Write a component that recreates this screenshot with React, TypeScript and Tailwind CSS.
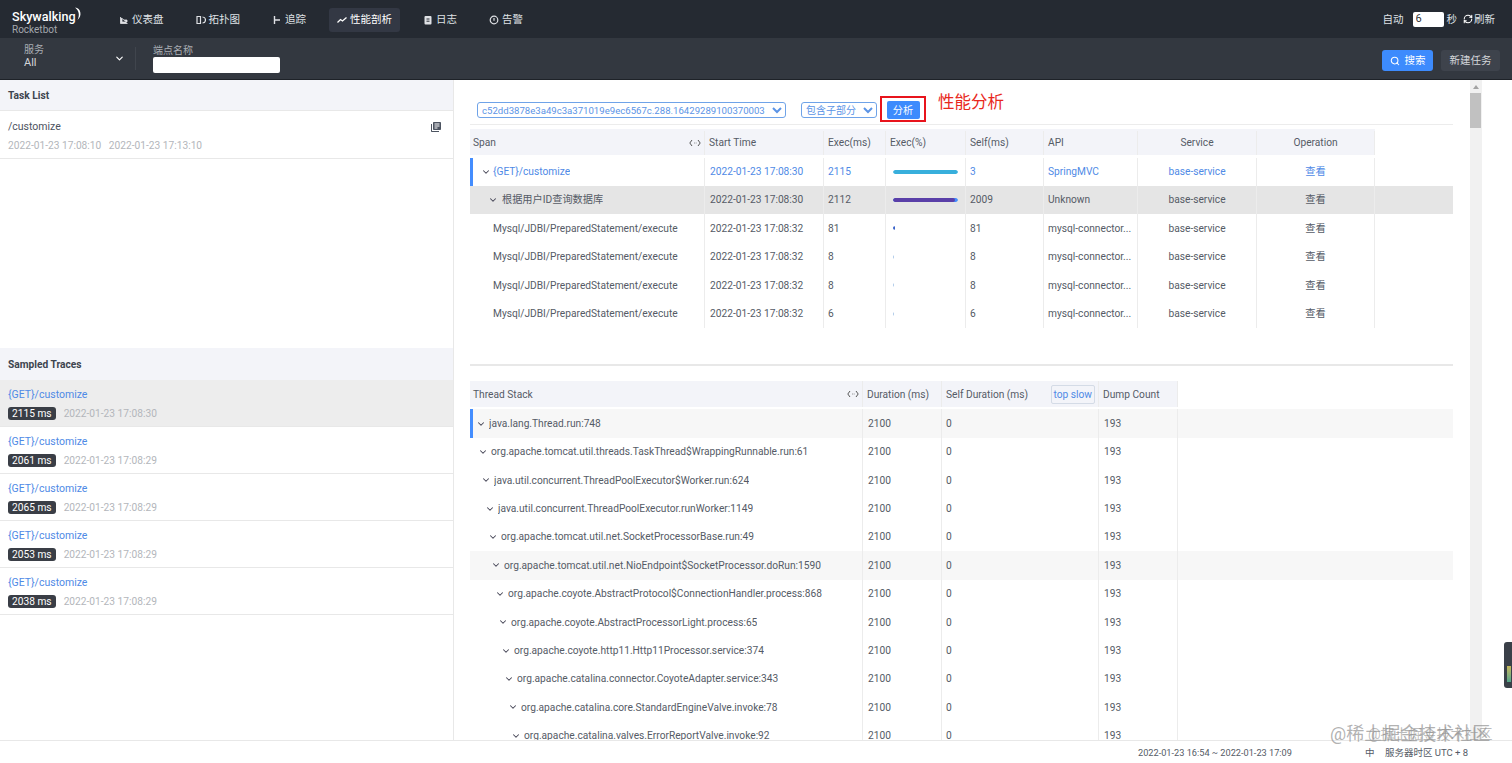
import React from 'react';
import { Search, RefreshCw, ChevronDown } from 'lucide-react';

const navItems = [
  { label: '仪表盘', icon: 'dash' },
  { label: '拓扑图', icon: 'topo' },
  { label: '追踪', icon: 'trace' },
  { label: '性能剖析', icon: 'perf', active: true },
  { label: '日志', icon: 'log' },
  { label: '告警', icon: 'alarm' },
];

const NavIcon: React.FC<{ name: string }> = ({ name }) => (
  <svg width="10" height="10" viewBox="0 0 10 10" fill="none" stroke="currentColor" strokeWidth="1.2" className="shrink-0">
    {name === 'dash' && <path d="M1.5 2v6.5h7M3 7V3.5l2 1.5h3v2z" fill="currentColor" strokeWidth="0.8" />}
    {name === 'topo' && <path d="M1 1.5h3.5v7H1zM6.5 2a3 3 0 0 1 0 6" />}
    {name === 'trace' && <path d="M2.5 1v8M2.5 5H8" strokeWidth="1.4" />}
    {name === 'perf' && <path d="M0.5 7.5L3.5 4.5L5.5 6L9.5 2.5" strokeWidth="1.3" />}
    {name === 'log' && (
      <>
        <rect x="1.5" y="1" width="7" height="8.5" rx="1" fill="currentColor" stroke="none" />
        <path d="M3.5 4h3M3.5 6.2h3" stroke="#252a32" strokeWidth="1" />
      </>
    )}
    {name === 'alarm' && (
      <>
        <circle cx="5" cy="5" r="3.8" />
        <path d="M5 3v2.8" />
      </>
    )}
  </svg>
);

const spans = [
  { name: '{GET}/customize', time: '2022-01-23 17:08:30', exec: '2115', self: '3', api: 'SpringMVC', kind: 'root' },
  { name: '根据用户ID查询数据库', time: '2022-01-23 17:08:30', exec: '2112', self: '2009', api: 'Unknown', kind: 'sel' },
  { name: 'Mysql/JDBI/PreparedStatement/execute', time: '2022-01-23 17:08:32', exec: '81', self: '81', api: 'mysql-connector...', kind: 'a' },
  { name: 'Mysql/JDBI/PreparedStatement/execute', time: '2022-01-23 17:08:32', exec: '8', self: '8', api: 'mysql-connector...', kind: 'b' },
  { name: 'Mysql/JDBI/PreparedStatement/execute', time: '2022-01-23 17:08:32', exec: '8', self: '8', api: 'mysql-connector...', kind: 'b' },
  { name: 'Mysql/JDBI/PreparedStatement/execute', time: '2022-01-23 17:08:32', exec: '6', self: '6', api: 'mysql-connector...', kind: 'b' },
];

const stacks = [
  'java.lang.Thread.run:748',
  'org.apache.tomcat.util.threads.TaskThread$WrappingRunnable.run:61',
  'java.util.concurrent.ThreadPoolExecutor$Worker.run:624',
  'java.util.concurrent.ThreadPoolExecutor.runWorker:1149',
  'org.apache.tomcat.util.net.SocketProcessorBase.run:49',
  'org.apache.tomcat.util.net.NioEndpoint$SocketProcessor.doRun:1590',
  'org.apache.coyote.AbstractProtocol$ConnectionHandler.process:868',
  'org.apache.coyote.AbstractProcessorLight.process:65',
  'org.apache.coyote.http11.Http11Processor.service:374',
  'org.apache.catalina.connector.CoyoteAdapter.service:343',
  'org.apache.catalina.core.StandardEngineValve.invoke:78',
  'org.apache.catalina.valves.ErrorReportValve.invoke:92',
];

const traces = [
  { ms: '2115 ms', time: '2022-01-23 17:08:30', selected: true },
  { ms: '2061 ms', time: '2022-01-23 17:08:29' },
  { ms: '2065 ms', time: '2022-01-23 17:08:29' },
  { ms: '2053 ms', time: '2022-01-23 17:08:29' },
  { ms: '2038 ms', time: '2022-01-23 17:08:29' },
];

const Caret: React.FC = () => <ChevronDown size={10} strokeWidth={2.5} className="shrink-0 text-[#445]" />;

const ResizeMark: React.FC = () => (
  <svg width="12" height="8" viewBox="0 0 12 8" fill="none" stroke="#444" strokeWidth="0.9">
    <path d="M3 1L0.8 4L3 7M9 1L11.2 4L9 7M5 4h0.6M6.8 4h0.6" />
  </svg>
);

const Cell: React.FC<{ className?: string; children?: React.ReactNode }> = ({ className = '', children }) => (
  <div className={`flex h-full items-center whitespace-nowrap border-r border-[#ececec] px-[4px] ${className}`}>{children}</div>
);

const SpanTable: React.FC = () => (
  <div className="w-[983px]">
    <div className="grid h-[26px] w-[905px] grid-cols-[235px_119px_62px_80px_78px_94px_119px_118px] bg-[#f3f4f9] pt-[2px] text-[#555b66]">
      <Cell className="justify-between !pl-[3px] !pr-[3px]">
        <span>Span</span>
        <ResizeMark />
      </Cell>
      <Cell>Start Time</Cell>
      <Cell>Exec(ms)</Cell>
      <Cell>Exec(%)</Cell>
      <Cell>Self(ms)</Cell>
      <Cell>API</Cell>
      <Cell className="justify-center">Service</Cell>
      <Cell className="justify-center">Operation</Cell>
    </div>
    <div className="mt-[2.5px] flex flex-col">
      {spans.map((s, i) => {
        const blue = s.kind === 'root';
        return (
          <div
            key={i}
            className={`grid h-[28.4px] grid-cols-[235px_119px_62px_80px_78px_94px_119px_118px_1fr] ${
              s.kind === 'sel' ? 'bg-[#e5e5e5]' : ''
            } ${blue ? 'text-[#4f8ae6]' : 'text-[#555b66]'}`}
          >
            <div className={`flex h-full items-center border-r border-[#ececec] ${blue ? 'border-l-[3px] border-l-[#448dfe] pl-[8px]' : s.kind === 'sel' ? 'pl-[18px]' : 'pl-[20px]'}`}>
              {(blue || s.kind === 'sel') && <Caret />}
              <span className={`truncate ${blue ? 'ml-[2px]' : s.kind === 'sel' ? 'ml-[4px]' : 'ml-[3px]'}`}>{s.name}</span>
            </div>
            <Cell className="!px-[5px]">{s.time}</Cell>
            <Cell className="!px-[4px]">{s.exec}</Cell>
            <Cell className="!px-[7px]">
              <div className="h-[4px] w-[65px] overflow-hidden rounded-full">
                {blue && <div className="h-full w-full rounded-full bg-[#38afdc]" />}
                {s.kind === 'sel' && (
                  <div className="h-full w-full rounded-full bg-[#448dfe]">
                    <div className="h-full w-[95%] rounded-full bg-[#5a3fa8]" />
                  </div>
                )}
                {s.kind === 'a' && <div className="h-full w-[2px] rounded-full bg-[#3a63c9]" />}
                {s.kind === 'b' && <div className="h-full w-[1px] bg-[#a9c7e8]" />}
              </div>
            </Cell>
            <Cell>{s.self}</Cell>
            <Cell>{s.api}</Cell>
            <Cell className="justify-center">base-service</Cell>
            <Cell className="justify-center">查看</Cell>
            <div />
          </div>
        );
      })}
    </div>
  </div>
);

const StackTable: React.FC = () => (
  <div>
    <div className="grid h-[26px] w-[708px] grid-cols-[393px_79px_157px_79px] bg-[#f3f4f9] text-[#555b66]">
      <Cell className="justify-between !pl-[3px] !pr-[3px]">
        <span>Thread Stack</span>
        <ResizeMark />
      </Cell>
      <Cell>Duration (ms)</Cell>
      <Cell className="justify-between !pr-[3px]">
        <span>Self Duration (ms)</span>
        <span className="rounded-[2px] border border-[#d4dbe6] px-[2px] py-[1px] text-[#4f8ae6]">top slow</span>
      </Cell>
      <Cell>Dump Count</Cell>
    </div>
    <div className="mt-[2px] flex flex-col">
      {stacks.map((name, i) => (
        <div
          key={i}
          className={`grid h-[28.4px] grid-cols-[393px_79px_157px_79px_1fr] text-[#555b66] ${
            i === 0 || i === 5 ? 'bg-[#f7f7f7]' : ''
          }`}
        >
          <div
            className={`flex h-full items-center border-r border-[#ececec] ${i === 0 ? 'border-l-[3px] border-l-[#448dfe]' : ''} ${
              ['pl-[3px]', 'pl-[8px]', 'pl-[11px]', 'pl-[15px]', 'pl-[18px]', 'pl-[21px]', 'pl-[25px]', 'pl-[28px]', 'pl-[31px]', 'pl-[34px]', 'pl-[38px]', 'pl-[41px]'][i]
            }`}
          >
            <Caret />
            <span className="ml-[3px] truncate">{name}</span>
          </div>
          <Cell className="!px-[5px]">2100</Cell>
          <Cell>0</Cell>
          <Cell className="!px-[5px]">193</Cell>
          <div />
        </div>
      ))}
    </div>
  </div>
);

export default function App() {
  return (
    <div className='relative flex h-[763px] w-[1512px] flex-col overflow-hidden bg-white font-["Roboto","Noto_Sans_CJK_SC",sans-serif] text-[10.2px]'>
      <header className="flex h-[38px] shrink-0 items-center bg-[#252a32] text-[10.5px] text-[#dfe1e5]">
        <div className="ml-[12px] mt-[8px] w-[107px] leading-none">
          <div className="relative w-[63px] text-[12.6px] font-medium leading-[14px] text-white">
            Skywalking
            <svg className="absolute -right-[8px] -top-[3px]" width="10" height="14" viewBox="0 0 10 14">
              <path d="M2 0.5C8 1 9.5 9 4.5 13C7 8 6 3.5 2 0.5z" fill="#fff" />
            </svg>
          </div>
          <div className="text-[10px] leading-[12px] text-[#a4a8ae]">Rocketbot</div>
        </div>
        <nav className="flex items-center pt-[2px]">
          {navItems.map((n, i) => (
            <div
              key={n.label}
              className={`flex h-[24px] items-center gap-[3px] rounded-[3px] ${n.active ? 'bg-[#333844] px-[8px] text-white' : ''} ${
                ['mr-[32px]', 'mr-[32px]', 'mr-[23px]', 'mr-[23px]', 'mr-[32px]', ''][i]
              }`}
            >
              <NavIcon name={n.icon} />
              <span>{n.label}</span>
            </div>
          ))}
        </nav>
        <div className="ml-auto flex items-center pr-[17px]">
          <span className="pt-[2px]">自动</span>
          <input readOnly value="6" className="ml-[9px] h-[15px] w-[31px] rounded-[2px] bg-white px-[3px] text-[11px] text-[#333] outline-none" />
          <span className="ml-[3px] pt-[2px]">秒</span>
          <RefreshCw size={10} strokeWidth={2.5} className="ml-[6px] text-white" />
          <span className="ml-[1px] pt-[2px]">刷新</span>
        </div>
      </header>

      <div className="flex h-[42px] shrink-0 items-center border-b border-[#1e2228] bg-[#333840] text-[#d4d6da]">
        <div className="mb-[6px] ml-[24px] w-[90px] leading-[13px]">
          <div className="text-[10px] text-[#a9adb3]">服务</div>
          <div className="text-[11px]">All</div>
        </div>
        <ChevronDown size={11} strokeWidth={2.5} className="text-white" />
        <div className="ml-[10px] h-[23px] w-px bg-[#40454d]" />
        <div className="ml-[17px]">
          <div className="text-[10px] leading-[13px] text-[#a9adb3]">端点名称</div>
          <input readOnly className="block h-[16px] w-[127px] rounded-[2px] bg-white outline-none" />
        </div>
        <div className="ml-auto mt-[4px] flex items-center gap-[8px] pr-[12px] text-[10.5px]">
          <div className="flex h-[21px] w-[51px] items-center justify-center gap-[5px] rounded-[3px] bg-[#3d8bfd] text-white">
            <Search size={10} strokeWidth={2.5} />
            <span>搜索</span>
          </div>
          <div className="flex h-[21px] w-[59px] items-center justify-center rounded-[3px] bg-[#3e434c] text-[#d4d6da]">新建任务</div>
        </div>
      </div>

      <div className="flex min-h-0 flex-1">
        <aside className="flex w-[454px] shrink-0 flex-col border-r border-[#e8e8e8]">
          <div className="flex h-[31px] shrink-0 items-center border-b border-[#e8e8e8] bg-[#f3f4f9] pl-[8px] pt-[2px] font-bold text-[#3d444f]">Task List</div>
          <div className="h-[48px] shrink-0 border-b border-[#e8e8e8] pl-[8px] pr-[11px] pt-[8px]">
            <div className="flex items-center justify-between text-[10.5px] text-[#4c5360]">
              <span>/customize</span>
              <svg width="12" height="12" viewBox="0 0 24 24" fill="#4c5360">
                <path d="M4 6H2v14c0 1.1.9 2 2 2h14v-2H4V6zm16-4H8c-1.1 0-2 .9-2 2v12c0 1.1.9 2 2 2h12c1.1 0 2-.9 2-2V4c0-1.1-.9-2-2-2zm-1 9H9V9h10v2zm-4 4H9v-2h6v2zm4-8H9V5h10v2z" />
              </svg>
            </div>
            <div className="mt-[3px] text-[#b3b6bb]">2022-01-23 17:08:10&nbsp;&nbsp; 2022-01-23 17:13:10</div>
          </div>
          <div className="h-[189px] shrink-0" />
          <div className="flex h-[32px] shrink-0 items-center bg-[#f3f4f9] pl-[8px] pt-[1px] font-bold text-[#3d444f]">Sampled Traces</div>
          {traces.map((t, i) => (
            <div key={i} className={`h-[47px] shrink-0 border-b border-[#e8e8e8] pl-[8px] pt-[7px] ${t.selected ? 'bg-[#ededed]' : ''}`}>
              <div className="text-[10.5px] text-[#4f8ae6]">{'{GET}/customize'}</div>
              <div className="mt-[3px] flex items-center gap-[8px]">
                <span className="flex h-[13px] items-center rounded-[3px] bg-[#3a3e46] px-[4px] text-white">{t.ms}</span>
                <span className="text-[#b3b6bb]">{t.time}</span>
              </div>
            </div>
          ))}
        </aside>

        <main className="relative flex min-w-0 flex-1 overflow-hidden">
          <div className="w-[1016px] shrink-0 pl-[16px]">
            <div className="flex h-[45px] w-[983px] items-start border-b border-[#ececec] pl-[7px] pt-[16px]">
              <select className="mt-[6px] h-[16px] w-[309px] rounded-[3px] border border-[#6fa3e8] bg-white text-[9.6px] text-[#5b94e6]">
                <option>c52dd3878e3a49c3a371019e9ec6567c.288.16429289100370003</option>
              </select>
              <select className="ml-[15px] mt-[6px] h-[16px] w-[76px] rounded-[3px] border border-[#6fa3e8] bg-white text-[10px] text-[#5b94e6]">
                <option>包含子部分</option>
              </select>
              <div className="ml-[3px] flex h-[26px] w-[46px] justify-center border-2 border-[#e8141c] pt-[3px]">
                <div className="flex h-[18px] w-[33px] items-center justify-center rounded-[2px] bg-[#3d8bfd] pt-[2px] text-white">分析</div>
              </div>
              <span className="ml-[12px] mt-[-5px] text-[16.5px] text-[#e8281c]">性能分析</span>
            </div>
            <div className="mt-[4px]">
              <SpanTable />
            </div>
            <div className="mt-[36.5px] h-[2px] w-[983px] bg-[#e8e8e8]" />
            <div className="mt-[15px] w-[983px]">
              <StackTable />
            </div>
          </div>
          <div className="flex h-full w-[12px] shrink-0 flex-col items-start bg-[#f1f1f1]">
            <div className="flex h-[13px] w-[11px] shrink-0 items-center justify-center">
              <div className="h-0 w-0 border-x-[3px] border-b-[4px] border-x-transparent border-b-[#a3a3a3]" />
            </div>
            <div className="h-[35px] w-[11px] bg-[#c1c1c1]" />
          </div>
        </main>
      </div>

      <footer className="flex h-[23px] shrink-0 items-center whitespace-nowrap border-t border-[#e8e8e8] bg-white pt-[2px] text-[#555b66]">
        <span className="ml-[1138px] text-[9.2px]">2022-01-23 16:54 ~ 2022-01-23 17:09</span>
        <span className="ml-[73px] text-[9.5px]">中</span>
        <span className="ml-[10.5px] text-[9.5px]">服务器时区 UTC + 8</span>
      </footer>

      <div className="absolute left-[1330px] top-[720px] text-[18px] text-[#8f8f8f]/70">@稀土掘金技术社区</div>
      <div className="absolute left-[1368px] top-[724px] text-[14px] text-[#8f8f8f]/60">@掘土掘金技术社区</div>
      <div className="absolute left-[1504px] top-[642px] flex h-[46px] w-[8px] items-end rounded-l-[3px] bg-[#3a4048] pb-[6px] pl-[3px]">
        <div className="h-[16px] w-[4px] bg-gradient-to-b from-[#c5b85a] to-[#4fa58a]" />
      </div>
    </div>
  );
}
